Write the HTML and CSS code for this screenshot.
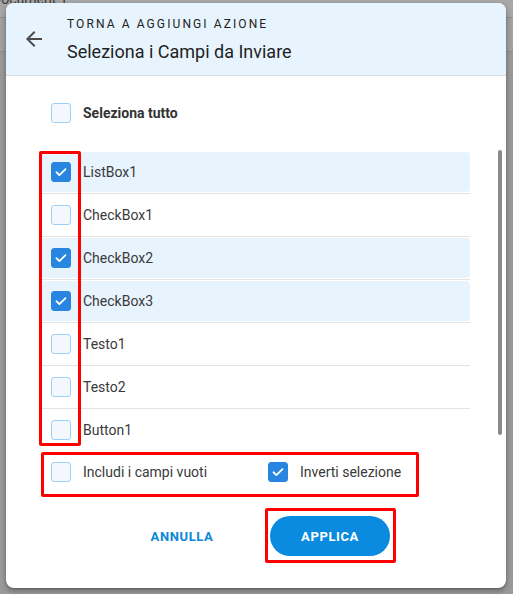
FILE: index.html
```html
<!DOCTYPE html>
<html lang="it">
<head>
<meta charset="utf-8">
<title>Seleziona i Campi da Inviare</title>
<link rel="stylesheet" href="styles.css">
</head>
<body>
  <div class="backdrop">
    <div class="backdrop-bar"><span class="doc-name">Document 1</span></div>
    <div class="backdrop-band"></div>
  </div>

  <div class="dialog">
    <header class="dialog-header">
      <button class="back-btn" aria-label="Indietro">
        <svg viewBox="0 0 24 24" width="24" height="24"><path d="M20 11H7.83l5.59-5.59L12 4l-8 8 8 8 1.41-1.41L7.83 13H20v-2z" fill="#4a4a4a"/></svg>
      </button>
      <div class="header-text">
        <div class="crumb">TORNA A AGGIUNGI AZIONE</div>
        <h1 class="title">Seleziona i Campi da Inviare</h1>
      </div>
    </header>

    <div class="dialog-body">
      <label class="select-all">
        <span class="box"></span>
        <span class="select-all-label">Seleziona tutto</span>
      </label>

      <div class="list-wrap">
        <ul class="field-list">
          <li class="field"><div class="field-row on"><span class="box checked"><svg viewBox="0 0 20 20"><path d="M5 10.3l3.2 3.1L15 6.8" /></svg></span><span class="field-name">ListBox1</span></div></li>
          <li class="field"><div class="field-row"><span class="box"></span><span class="field-name">CheckBox1</span></div></li>
          <li class="field"><div class="field-row on"><span class="box checked"><svg viewBox="0 0 20 20"><path d="M5 10.3l3.2 3.1L15 6.8" /></svg></span><span class="field-name">CheckBox2</span></div></li>
          <li class="field"><div class="field-row on"><span class="box checked"><svg viewBox="0 0 20 20"><path d="M5 10.3l3.2 3.1L15 6.8" /></svg></span><span class="field-name">CheckBox3</span></div></li>
          <li class="field"><div class="field-row"><span class="box"></span><span class="field-name">Testo1</span></div></li>
          <li class="field"><div class="field-row"><span class="box"></span><span class="field-name">Testo2</span></div></li>
          <li class="field"><div class="field-row"><span class="box"></span><span class="field-name">Button1</span></div></li>
        </ul>
        <div class="scroll-thumb"></div>
      </div>

      <div class="options">
        <label class="option"><span class="box"></span><span class="option-label">Includi i campi vuoti</span></label>
        <label class="option"><span class="box checked"><svg viewBox="0 0 20 20"><path d="M5 10.3l3.2 3.1L15 6.8" /></svg></span><span class="option-label">Inverti selezione</span></label>
      </div>

      <div class="actions">
        <button class="btn-text">ANNULLA</button>
        <button class="btn-primary">APPLICA</button>
      </div>
    </div>
  </div>

  <div class="mark mark-list"></div>
  <div class="mark mark-options"></div>
  <div class="mark mark-apply"></div>
</body>
</html>
```

FILE: styles.css
```css
* { box-sizing: border-box; }

html, body {
  margin: 0;
  padding: 0;
  width: 513px;
  height: 594px;
  overflow: hidden;
}

body {
  background: #9b9b9b;
  font-family: Roboto, "Liberation Sans", sans-serif;
  position: relative;
}

/* dimmed page behind the modal */
.backdrop-bar {
  height: 18px;
  background: #a7a7a7;
  border-bottom: 1px solid #8f8f8f;
  overflow: hidden;
}
.doc-name {
  display: block;
  margin: -9px 0 0 -8px;
  font-size: 14px;
  color: #3c3c3c;
}
.backdrop-band {
  height: 34px;
  background: #a3a3a3;
  border-bottom: 1px solid #8e8e8e;
}

/* modal */
.dialog {
  position: absolute;
  left: 6px;
  top: 3px;
  width: 500px;
  height: 585px;
  background: #fff;
  border-radius: 8px;
  overflow: hidden;
  box-shadow: 0 3px 6px rgba(0, 0, 0, 0.3), 0 1px 2px rgba(0, 0, 0, 0.2);
  display: flex;
  flex-direction: column;
}

.dialog-header {
  height: 73px;
  background: #e7f4fd;
  border-bottom: 1px solid #d3dee6;
  display: flex;
  align-items: center;
}

.back-btn {
  width: 24px;
  height: 24px;
  margin: 0 21px 0 16px;
  padding: 0;
  border: 0;
  background: none;
  display: flex;
  align-items: center;
  justify-content: center;
}

.header-text {
  display: flex;
  flex-direction: column;
  padding-top: 1px;
}

.crumb {
  font-size: 12px;
  letter-spacing: 2.1px;
  color: #222;
  line-height: 14px;
}

.title {
  margin: 10px 0 0;
  font-size: 18px;
  font-weight: 400;
  color: #1f1f1f;
  line-height: 22px;
}

.dialog-body {
  flex: 1;
  display: flex;
  flex-direction: column;
  padding: 0 0 0 35px;
}

/* checkbox */
.box {
  width: 20px;
  height: 20px;
  flex: none;
  border-radius: 3px;
  background: #f2f8fd;
  border: 1px solid #9dd0f6;
  display: flex;
  align-items: center;
  justify-content: center;
}
.box.checked {
  background: #2886e0;
  border-color: #2886e0;
}
.box svg {
  width: 20px;
  height: 20px;
}
.box svg path {
  fill: none;
  stroke: #fff;
  stroke-width: 2;
  stroke-linecap: round;
  stroke-linejoin: round;
}

.select-all {
  display: flex;
  align-items: center;
  gap: 12px;
  margin: 27px 0 0 10px;
  height: 20px;
}
.select-all-label {
  font-size: 14px;
  font-weight: 700;
  color: #333;
}

.list-wrap {
  position: relative;
  margin-top: 28px;
  height: 300px;
  padding-right: 36px;
}

.field-list {
  list-style: none;
  margin: 0;
  padding: 0;
  width: 429px;
}

.field {
  padding: 1px 0;
  border-bottom: 1px solid #e3e3e3;
}
.field:last-child {
  border-bottom: 0;
}

.field-row {
  height: 40px;
  border-radius: 4px;
  display: flex;
  align-items: center;
  gap: 12px;
  padding-left: 10px;
}
.field-row.on {
  background: #e7f3fd;
}

.field-name,
.option-label {
  font-size: 14px;
  color: #3a3a3a;
}

.scroll-thumb {
  position: absolute;
  right: 4px;
  top: -1px;
  width: 4px;
  height: 285px;
  border-radius: 2px;
  background: #8a8a8a;
}

.options {
  display: flex;
  align-items: center;
  margin-top: 11px;
  padding-left: 10px;
  height: 20px;
}
.option {
  display: flex;
  align-items: center;
  gap: 12px;
}
.option:first-child {
  width: 217px;
}

.actions {
  display: flex;
  align-items: center;
  margin-top: 34px;
  padding-left: 94px;
}

.btn-text {
  border: 0;
  background: none;
  padding: 0;
  width: 94px;
  font-family: Roboto, "Liberation Sans", sans-serif;
  font-size: 13px;
  font-weight: 700;
  letter-spacing: 0.6px;
  color: #0b87d9;
  text-align: center;
}

.btn-primary {
  margin-left: 41px;
  width: 120px;
  height: 40px;
  border: 0;
  border-radius: 20px;
  background: #0a8bdf;
  color: #fff;
  font-family: Roboto, "Liberation Sans", sans-serif;
  font-size: 13px;
  font-weight: 700;
  letter-spacing: 0.6px;
}

/* red highlight frames drawn over the dialog */
.mark {
  position: absolute;
  border: 3px solid #ff0000;
  border-radius: 2px;
  pointer-events: none;
}
.mark-list {
  left: 39px;
  top: 151px;
  width: 42px;
  height: 295px;
}
.mark-options {
  left: 41px;
  top: 452px;
  width: 378px;
  height: 45px;
}
.mark-apply {
  left: 265px;
  top: 508px;
  width: 131px;
  height: 55px;
}
```
